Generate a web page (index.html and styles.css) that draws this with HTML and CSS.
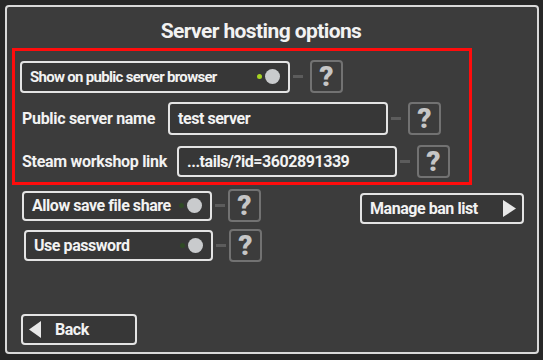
FILE: index.html
```html
<!DOCTYPE html>
<html lang="en">
<head>
  <meta charset="UTF-8">
  <title>Server hosting options</title>
  <link rel="stylesheet" href="styles.css">
</head>
<body>
  <div class="panel">
    <h1 class="title">Server hosting options</h1>

    <!-- highlighted public server settings -->
    <div class="highlight">
      <div class="row row-browser">
        <div class="toggle toggle-browser">
          <span class="toggle-text">Show on public server browser</span>
          <span class="led led-on"></span>
          <span class="knob"></span>
        </div>
        <span class="link"></span>
        <div class="help">?</div>
      </div>

      <div class="row row-field">
        <span class="label label-name">Public server name</span>
        <div class="field field-name">test server</div>
        <span class="link"></span>
        <div class="help">?</div>
      </div>

      <div class="row row-field">
        <span class="label label-link">Steam workshop link</span>
        <div class="field field-link">...tails/?id=3602891339</div>
        <span class="link"></span>
        <div class="help">?</div>
      </div>
    </div>

    <div class="options">
      <div class="option-list">
        <div class="row row-share">
          <div class="toggle toggle-share">
            <span class="toggle-text">Allow save file share</span>
            <span class="led"></span>
            <span class="knob"></span>
          </div>
          <span class="link link-short"></span>
          <div class="help">?</div>
        </div>
        <div class="row row-password">
          <div class="toggle toggle-password">
            <span class="toggle-text">Use password</span>
            <span class="led"></span>
            <span class="knob"></span>
          </div>
          <span class="link link-short"></span>
          <div class="help">?</div>
        </div>
      </div>

      <button class="nav-button ban-button">
        <span>Manage ban list</span>
        <svg class="arrow" width="13" height="17" viewBox="0 0 13 17"><polygon points="0,0 13,8.5 0,17" fill="#e8e8e8"/></svg>
      </button>
    </div>

    <button class="nav-button back-button">
      <svg class="arrow" width="12" height="17" viewBox="0 0 12 17"><polygon points="12,0 0,8.5 12,17" fill="#e8e8e8"/></svg>
      <span>Back</span>
    </button>
  </div>
</body>
</html>
```

FILE: styles.css
```css
body {
  margin: 0;
  width: 543px;
  height: 360px;
  overflow: hidden;
  background-color: #272727;
  font-family: Roboto, "Liberation Sans", sans-serif;
  font-weight: 700;
  color: #f2f2f2;
}

.panel {
  margin: 5px 4px 0 5px;
  height: 345px;
  border: 2px solid #d9d9d9;
  border-radius: 4px;
  background-color: #3c3c3c;
  padding: 0 5px;
}

.title {
  margin: 10px 0 3px;
  padding-right: 22px;
  height: 28px;
  line-height: 28px;
  font-size: 21px;
  text-align: center;
  letter-spacing: -0.6px;
}

.highlight {
  width: 460px;
  border: 3px solid #ff0c0c;
  padding: 9px 0 4px 5px;
  box-sizing: border-box;
}

.row {
  display: flex;
  align-items: center;
}

.row-field {
  margin-top: 9px;
  padding-left: 2px;
}

.row-field + .row-field {
  margin-top: 10px;
}

.toggle,
.field,
.nav-button {
  display: flex;
  align-items: center;
  box-sizing: border-box;
  border: 2px solid #e4e4e4;
  border-radius: 4px;
  background-color: #373737;
  font-size: 16px;
  letter-spacing: -0.45px;
  color: #f2f2f2;
}

.toggle {
  height: 32px;
  padding: 0 8px;
}

.toggle-text {
  flex: 1;
}

.toggle-browser {
  width: 270px;
  font-size: 15px;
  letter-spacing: -0.7px;
}

.led {
  width: 5px;
  height: 5px;
  border-radius: 50%;
  background-color: #2f4a25;
  margin-right: 3px;
}

.led-on {
  background-color: #a6d321;
}

.knob {
  width: 15px;
  height: 15px;
  border-radius: 50%;
  background-color: #c9cbcd;
}

.link {
  width: 10px;
  height: 3px;
  background-color: #5c5c5c;
  margin: 0 7px 0 3px;
}

.link-short {
  margin-right: 3px;
}

.help {
  width: 33px;
  height: 33px;
  box-sizing: border-box;
  border: 2px solid #727272;
  border-radius: 4px;
  display: flex;
  align-items: center;
  justify-content: center;
  font-size: 28px;
  font-weight: 900;
  color: #c6c6c6;
}

.label {
  font-size: 16px;
  letter-spacing: -0.3px;
}

.label-name {
  width: 146px;
}

.label-link {
  width: 155px;
}

.field {
  height: 33px;
  width: 220px;
  padding: 0 8px;
}

.field-link {
  height: 31px;
}

.options {
  display: flex;
  justify-content: space-between;
  align-items: flex-start;
  padding: 4px 8px 0 10px;
}

.toggle-share {
  width: 190px;
  height: 30px;
}

.row-password {
  margin-top: 7px;
  padding-left: 2px;
}

.toggle-password {
  width: 189px;
  height: 31px;
}

.nav-button {
  height: 31px;
  padding: 0 6px 0 8px;
  font-family: Roboto, "Liberation Sans", sans-serif;
  font-weight: 700;
}

.ban-button {
  width: 164px;
  margin-top: 4px;
  justify-content: space-between;
}

.back-button {
  width: 116px;
  margin: 52px 0 0 9px;
  padding-left: 6px;
}

.back-button .arrow {
  margin-right: 14px;
}
```
